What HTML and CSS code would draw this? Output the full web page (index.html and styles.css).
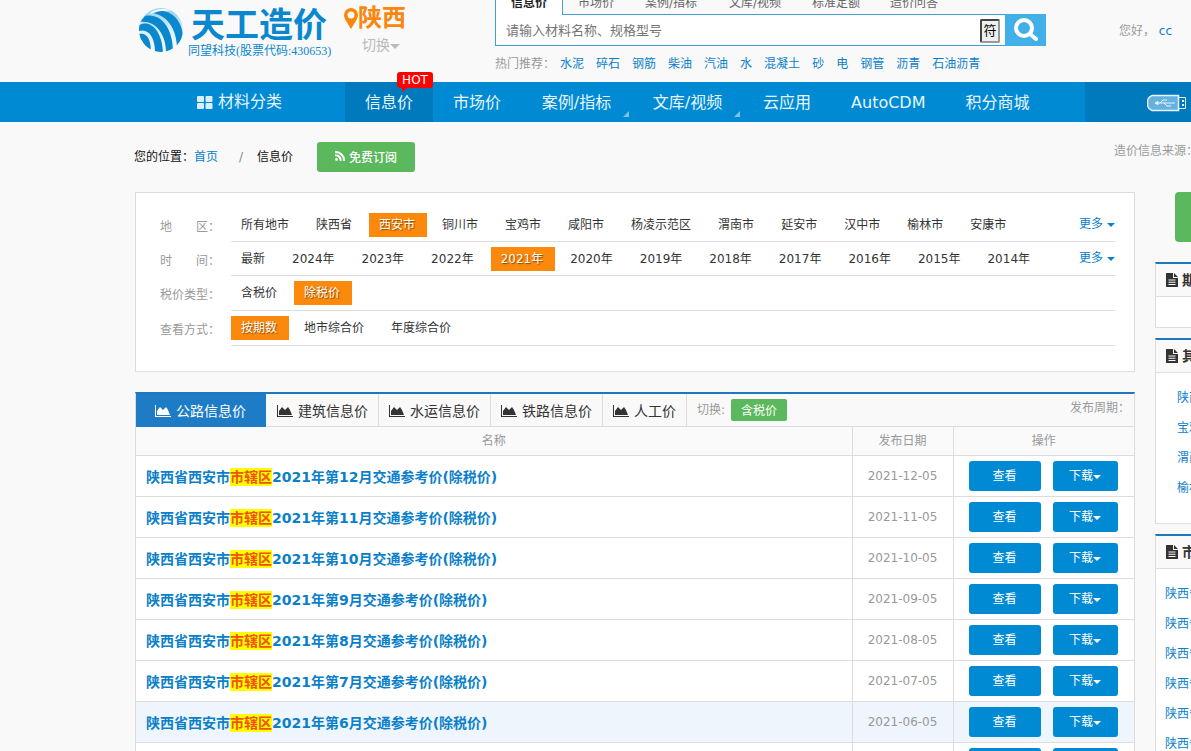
FILE: index.html
```html
<!DOCTYPE html>
<html lang="zh-CN">
<head>
<meta charset="utf-8">
<title>信息价 - 天工造价</title>
<link rel="stylesheet" href="styles.css">
</head>
<body>
<svg class="defs" width="0" height="0" aria-hidden="true">
  <symbol id="chart" viewBox="0 0 16 12"><path d="M0 0h1v11h15v1H0z"/><path d="M2 10V6l3-4 3 3 3-3 2 3 2 5z"/></symbol>
  <symbol id="file" viewBox="0 0 12 14"><path fill-rule="evenodd" d="M0 0h7v5h5v9H0zM2.500 6.500v1h7v-1zm0 2.300v1h7v-1zm0 2.300v1h7v-1z"/><path d="M8 0l4 4H8z"/></symbol>
</svg>

<header class="header">
  <a class="logo" href="#">
    <svg class="logo-ball" viewBox="0 0 44 44" aria-hidden="true">
      <defs>
        <clipPath id="ball"><circle cx="22" cy="22" r="22"/></clipPath>
        <linearGradient id="shade" x1="0" y1="0" x2="0" y2="1"><stop offset="0" stop-color="#8fcdee"/><stop offset=".5" stop-color="#d9effa"/><stop offset="1" stop-color="#f9f9f9"/></linearGradient>
      </defs>
      <g clip-path="url(#ball)">
        <path fill="url(#shade)" d="M0 0h44v44H0z"/>
        <g fill="#0a87cd">
          <path d="M0 26C7 24 12 30 12 44H5C5 36 4 31 0 32z"/>
          <path d="M0 17C11 11 23 22 24 44H16C16 30 10 20 0 23z"/>
          <path d="M6 8C22 5 34 20 34 44H27C27 26 16 12 1 14z"/>
          <path d="M20 3C34 2 45 15 44 32L38 42C38 23 30 8 14 5z"/>
        </g>
        <path fill="#f9f9f9" d="M12 4C20 0 27 0 32 3C25 2 18 3 11 6z"/>
      </g>
    </svg>
    <span class="logo-text">
      <strong class="logo-name">天工造价</strong>
      <span class="logo-sub">同望科技(股票代码:430653)</span>
    </span>
  </a>
  <div class="region">
    <div class="region-name">
      <svg width="14" height="21" viewBox="0 0 14 21" aria-hidden="true"><path fill="#f9870d" fill-rule="evenodd" d="M7 0a7 7 0 0 1 7 7c0 3-2 6-7 14C2 13 0 10 0 7a7 7 0 0 1 7-7zm0 3.500a3.500 3.500 0 1 0 0 7 3.500 3.500 0 0 0 0-7z"/></svg>
      <span>陕西</span>
    </div>
    <a class="region-switch" href="#">切换<i class="caret"></i></a>
  </div>
  <div class="search">
    <nav class="search-tabs">
      <a class="on" href="#">信息价</a><a href="#">市场价</a><a class="wide" href="#">案例/指标</a><a class="wide" href="#">文库/视频</a><a href="#">标准定额</a><a href="#">造价问答</a>
    </nav>
    <form class="search-box">
      <input class="search-input" type="text" aria-label="搜索" placeholder="请输入材料名称、规格型号">
      <button class="symbol-btn" type="button">符</button>
      <button class="search-btn" type="button" aria-label="搜索">
        <svg width="24" height="24" viewBox="0 0 24 24" aria-hidden="true"><circle cx="10" cy="10" r="8" fill="none" stroke="#fff" stroke-width="4"/><path d="M16 16l6 5" stroke="#fff" stroke-width="4" stroke-linecap="round"/></svg>
      </button>
    </form>
    <div class="hot">
      <span class="hot-label">热门推荐：</span>
      <a href="#">水泥</a><a href="#">碎石</a><a href="#">钢筋</a><a href="#">柴油</a><a href="#">汽油</a><a href="#">水</a><a href="#">混凝土</a><a href="#">砂</a><a href="#">电</a><a href="#">钢管</a><a href="#">沥青</a><a href="#">石油沥青</a>
    </div>
  </div>
  <div class="user">您好， <a href="#">cc</a></div>
</header>

<nav class="nav">
  <a class="nav-cat" href="#"><svg width="16" height="13" viewBox="0 0 16 13" fill="#d9f0fc" aria-hidden="true"><rect width="7" height="6" rx="1"/><rect x="8.500" width="7" height="6" rx="1"/><rect y="7" width="7" height="6" rx="1"/><rect x="8.500" y="7" width="7" height="6" rx="1"/></svg>材料分类</a>
  <a class="nav-item on" href="#">信息价<span class="badge">HOT</span></a>
  <a class="nav-item" href="#">市场价</a>
  <a class="nav-item sub" href="#">案例/指标</a>
  <a class="nav-item sub" href="#">文库/视频</a>
  <a class="nav-item" href="#">云应用</a>
  <a class="nav-item" href="#">AutoCDM</a>
  <a class="nav-item" href="#">积分商城</a>
  <a class="nav-usb" href="#" aria-label="USB">
    <svg width="40" height="18" viewBox="0 0 40 18" fill="none" stroke="#e4f5ff" aria-hidden="true"><path d="M31.500 1.500v15H5l-3-2-1.500-3v-5L2 3.500l3-2z" fill="#66b1de" stroke-width="1.500"/><path d="M32 3.500h6.500v11H32"/><path d="M35 6h2v2h-2zM35 10h2v2h-2z" fill="#e4f5ff" stroke="none"/><path d="M10 9h18M13 9l3-3h4M17 9l3 3h4"/><path d="M8 9l3-1.500v3z" fill="#e4f5ff"/></svg>
  </a>
</nav>

<div class="crumbs">
  <span>您的位置：</span><a href="#">首页</a><span class="slash">/</span><span>信息价</span>
  <button class="subscribe" type="button"><svg width="10" height="10" viewBox="0 0 10 10" fill="none" stroke="#fff" stroke-width="2" aria-hidden="true"><circle cx="1.500" cy="8.500" r="1.400" fill="#fff" stroke="none"/><path d="M0 4.200a5 5 0 0 1 5.500 5.800M0 1a8.500 8.500 0 0 1 9 9"/></svg>免费订阅</button>
  <span class="source">造价信息来源：</span>
</div>

<div class="page">
  <main class="main">
    <section class="filters">
      <div class="frow"><span class="flabel">地　　区：</span><div class="fitems"><a href="#">所有地市</a><a href="#">陕西省</a><a class="on" href="#">西安市</a><a href="#">铜川市</a><a href="#">宝鸡市</a><a href="#">咸阳市</a><a href="#">杨凌示范区</a><a href="#">渭南市</a><a href="#">延安市</a><a href="#">汉中市</a><a href="#">榆林市</a><a href="#">安康市</a><button class="more" type="button">更多<i class="caret"></i></button></div></div>
      <div class="frow"><span class="flabel">时　　间：</span><div class="fitems"><a href="#">最新</a><a href="#">2024年</a><a href="#">2023年</a><a href="#">2022年</a><a class="on" href="#">2021年</a><a href="#">2020年</a><a href="#">2019年</a><a href="#">2018年</a><a href="#">2017年</a><a href="#">2016年</a><a href="#">2015年</a><a href="#">2014年</a><button class="more" type="button">更多<i class="caret"></i></button></div></div>
      <div class="frow tall"><span class="flabel">税价类型：</span><div class="fitems"><a href="#">含税价</a><a class="on" href="#">除税价</a></div></div>
      <div class="frow tall"><span class="flabel">查看方式：</span><div class="fitems"><a class="on" href="#">按期数</a><a href="#">地市综合价</a><a href="#">年度综合价</a></div></div>
    </section>

    <section class="list">
      <div class="tabs">
        <a class="tab on" href="#"><svg><use href="#chart"/></svg>公路信息价</a>
        <a class="tab" href="#"><svg><use href="#chart"/></svg>建筑信息价</a>
        <a class="tab" href="#"><svg><use href="#chart"/></svg>水运信息价</a>
        <a class="tab" href="#"><svg><use href="#chart"/></svg>铁路信息价</a>
        <a class="tab" href="#"><svg><use href="#chart"/></svg>人工价</a>
        <span class="toggle">切换: <button class="tax" type="button">含税价</button></span>
        <span class="period">发布周期：</span>
      </div>
      <table class="table">
        <colgroup><col><col class="c-date"><col class="c-act"></colgroup>
        <thead><tr><th>名称</th><th>发布日期</th><th>操作</th></tr></thead>
        <tbody>
          <tr><td><a class="title" href="#">陕西省西安市<mark>市辖区</mark>2021年第12月交通参考价(除税价)</a></td><td class="date">2021-12-05</td><td><div class="acts"><button class="btn view" type="button">查看</button><button class="btn down" type="button">下载<i class="caret"></i></button></div></td></tr>
          <tr><td><a class="title" href="#">陕西省西安市<mark>市辖区</mark>2021年第11月交通参考价(除税价)</a></td><td class="date">2021-11-05</td><td><div class="acts"><button class="btn view" type="button">查看</button><button class="btn down" type="button">下载<i class="caret"></i></button></div></td></tr>
          <tr><td><a class="title" href="#">陕西省西安市<mark>市辖区</mark>2021年第10月交通参考价(除税价)</a></td><td class="date">2021-10-05</td><td><div class="acts"><button class="btn view" type="button">查看</button><button class="btn down" type="button">下载<i class="caret"></i></button></div></td></tr>
          <tr><td><a class="title" href="#">陕西省西安市<mark>市辖区</mark>2021年第9月交通参考价(除税价)</a></td><td class="date">2021-09-05</td><td><div class="acts"><button class="btn view" type="button">查看</button><button class="btn down" type="button">下载<i class="caret"></i></button></div></td></tr>
          <tr><td><a class="title" href="#">陕西省西安市<mark>市辖区</mark>2021年第8月交通参考价(除税价)</a></td><td class="date">2021-08-05</td><td><div class="acts"><button class="btn view" type="button">查看</button><button class="btn down" type="button">下载<i class="caret"></i></button></div></td></tr>
          <tr><td><a class="title" href="#">陕西省西安市<mark>市辖区</mark>2021年第7月交通参考价(除税价)</a></td><td class="date">2021-07-05</td><td><div class="acts"><button class="btn view" type="button">查看</button><button class="btn down" type="button">下载<i class="caret"></i></button></div></td></tr>
          <tr class="hover"><td><a class="title" href="#">陕西省西安市<mark>市辖区</mark>2021年第6月交通参考价(除税价)</a></td><td class="date">2021-06-05</td><td><div class="acts"><button class="btn view" type="button">查看</button><button class="btn down" type="button">下载<i class="caret"></i></button></div></td></tr>
          <tr><td></td><td class="date"></td><td><div class="acts"><button class="btn view" type="button" aria-label="查看"></button><button class="btn down" type="button" aria-label="下载"></button></div></td></tr>
        </tbody>
      </table>
    </section>
  </main>

  <aside class="side">
    <button class="side-btn" type="button" aria-label="订阅"></button>
    <section class="box"><h2><svg><use href="#file"/></svg>期</h2><div class="box-body empty"></div></section>
    <section class="box"><h2><svg><use href="#file"/></svg>其</h2><div class="box-body indent"><a href="#">陕西</a><a href="#">宝鸡</a><a href="#">渭南</a><a href="#">榆林</a></div></section>
    <section class="box"><h2><svg><use href="#file"/></svg>市</h2><div class="box-body"><a href="#">陕西省</a><a href="#">陕西省</a><a href="#">陕西省</a><a href="#">陕西省</a><a href="#">陕西省</a><a href="#">陕西省</a></div></section>
  </aside>
</div>
</body>
</html>
```
FILE: styles.css
```css
* { box-sizing: border-box; }
body {
  margin: 0;
  height: 100vh;
  overflow: hidden;
  background: #f9f9f9;
  color: #333;
  font: 12px/20px "DejaVu Sans", "Noto Sans CJK SC", sans-serif;
}
a { color: #0b80c9; text-decoration: none; }
button, input { font-family: inherit; font-size: 12px; margin: 0; }
button { cursor: pointer; border: 0; padding: 0; }
.defs { position: absolute; }
.caret {
  display: inline-block;
  border: 4px solid transparent;
  border-top-color: currentColor;
  border-bottom: 0;
  vertical-align: middle;
}

/* header */
.header { display: flex; height: 82px; padding-left: 139px; white-space: nowrap; }
.logo { display: flex; gap: 5px; width: 205px; padding-top: 8px; color: #0a87cd; }
.logo-ball { width: 44px; height: 44px; flex: none; }
.logo-text { display: flex; flex-direction: column; }
.logo-name { padding-left: 3px; font-size: 34px; line-height: 34px; font-weight: 700; }
.logo-sub { font: 12px/18px "Liberation Serif", "Noto Sans CJK SC", serif; }
.region { width: 151px; }
.region-name { display: flex; align-items: center; height: 36px; color: #f9870d; font-size: 24px; font-weight: 700; }
.region-switch { display: block; padding-left: 18px; color: #bbb; font-size: 14px; line-height: 18px; }
.region-switch .caret { border-width: 5px 5px 0; }
.search { flex: 0 0 551px; }
.search-tabs { position: relative; display: flex; height: 15px; align-items: flex-end; overflow: hidden; }
.search-tabs a { flex: none; height: 27px; padding: 0 15px; color: #666; line-height: 30px; text-align: center; }
.search-tabs .wide { width: 84px; }
.search-tabs .on { width: 68px; border: solid #42a0d6; border-width: 0 1px; background: #fff; color: #222; font-weight: 700; padding: 0; }
.search-box { display: flex; height: 32px; margin-top: -1px; border: 1px solid #42a0d6; border-right: 0; background: #fff; }
.search-input { flex: 1; min-width: 0; border: 0; padding: 0 10px; outline: 0; background: none; font-size: 13px; }
.search-input::placeholder { color: #757575; }
.symbol-btn { width: 20px; height: 24px; margin: 4px 5px 0 0; border: 2px inset #999; border-radius: 2px; background: #efefef; font-size: 13px; line-height: 20px; }
.search-btn { width: 41px; margin: -1px 0; background: #42b0e8; display: flex; align-items: center; justify-content: center; }
.hot { display: flex; gap: 12px; padding-top: 8px; }
.hot-label { margin-right: -7px; color: #999; }
.user { padding: 21px 0 0 73px; color: #999; }

/* navigation */
.nav { display: flex; height: 40px; background: #008ad3; line-height: 42px; white-space: nowrap; }
.nav a { color: #e6f6ff; font-size: 16px; }
.nav-cat { display: flex; align-items: center; gap: 5px; width: 345px; padding-left: 197px; }
.nav-item { position: relative; padding: 0 20px; text-align: center; }
.nav-item.on { background: #007abd; }
.sub { width: 111px; }
.sub::after { content: ""; position: absolute; right: 3px; bottom: 5px; border: solid transparent; border-color: transparent transparent #7cc3ea; border-width: 0 0 6px 6px; }
.badge { position: absolute; top: -10px; right: 0; width: 36px; height: 16px; border-radius: 3px; background: #f00; color: #fff; font-size: 12px; line-height: 16px; }
.badge::after { content: ""; position: absolute; left: 5px; top: 16px; border: solid transparent; border-width: 4px 5px 0 0; border-top-color: #f00; }
.nav-usb { flex: 1; max-width: 106px; margin-left: auto; padding: 2px 0 0 62px; background: #007abd; display: flex; align-items: center; overflow: hidden; }
.nav-usb svg { flex: none; }

/* breadcrumb */
.crumbs { display: flex; align-items: center; height: 70px; padding-left: 134px; color: #111; white-space: nowrap; overflow: hidden; }
.slash { margin: 0 14px 0 21px; color: #888; }
.subscribe { display: flex; align-items: center; justify-content: center; gap: 4px; width: 98px; height: 30px; margin-left: 24px; padding-bottom: 2px; border-radius: 3px; background: #5cb85c; color: #fff; font-weight: 500; }
.source { flex: 0 0 77px; margin: 0 0 12px auto; color: #999; overflow: hidden; }

/* columns */
.page { display: flex; gap: 20px; padding-left: 135px; }
.main { flex: 1; min-width: 0; }
.side { flex: 0 0 36px; overflow: hidden; white-space: nowrap; }

/* filters */
.filters { padding: 15px 19px 25px 24px; border: 1px solid #ddd; background: #fff; }
.frow { display: flex; height: 34px; white-space: nowrap; }
.tall { height: 35px; }
.flabel { width: 71px; padding-top: 9px; color: #999; }
.fitems { display: flex; flex: 1; gap: 5px; padding-top: 5px; border-bottom: 1px solid #ddd; }
.fitems a { height: 24px; padding: 0 12px 0 10px; color: #333; line-height: 24px; }
.fitems .on { background: #fb890b; color: #fff; text-shadow: 1px 1px 1px #8a4a00; }
.more { height: 22px; margin-left: auto; background: none; color: #0b80c9; line-height: 22px; }
.more .caret { margin-left: 4px; }

/* price list */
.list { margin-top: 20px; border: 1px solid #ddd; border-top: 2px solid #1e78bd; }
.tabs { display: flex; height: 33px; border-bottom: 1px solid #ddd; white-space: nowrap; }
.tab { display: flex; align-items: center; gap: 5px; height: 33px; padding: 0 10px; border-right: 1px solid #ddd; color: #333; font-size: 14px; }
.tab svg { width: 16px; height: 12px; fill: currentColor; }
.tab.on { width: 131px; padding: 0 19px; border-color: #f9f9f9; background: #1e7cc6 padding-box; color: #fff; }
.toggle { display: flex; gap: 6px; align-items: center; padding-left: 10px; color: #999; }
.tax { width: 56px; height: 22px; padding-bottom: 2px; border-radius: 2px; background: #5cb85c; color: #fff; }
.period { margin-left: auto; padding: 4px 4px 0 0; color: #999; }
.table { width: 100%; border-collapse: collapse; table-layout: fixed; background: #fff; }
.c-date { width: 101px; }
.c-act { width: 181px; }
.table th { height: 28px; padding: 0; border-bottom: 1px solid #ddd; background: #fafafa; color: #999; font-weight: 400; }
.table td { height: 41px; padding: 0; border-bottom: 1px solid #ddd; }
.table th + th, .table td + td { border-left: 1px solid #ddd; }
.hover td { background: #eef5fd; }
.title { display: block; padding: 2px 0 0 10px; font-size: 14px; font-weight: 700; }
.title mark { padding: 1px 0; background: #ff0; color: #f4510b; }
.date { color: #999; text-align: center; }
.acts { display: flex; gap: 12px; padding-left: 15px; }
.btn { height: 30px; padding-bottom: 2px; border-radius: 3px; background: #008ad3; color: #fff; }
.view { width: 72px; }
.down { width: 65px; }

/* sidebar */
.side-btn { display: block; width: 200px; height: 50px; margin: 0 0 20px 20px; border-radius: 4px; background: #5cb85c; }
.box { width: 260px; margin-bottom: 10px; border: 1px solid #ddd; border-top: 2px solid #1e78bd; background: #fff; }
.box h2 { display: flex; align-items: center; gap: 4px; height: 33px; margin: 0; padding-left: 10px; border-bottom: 1px solid #ddd; background: #f9f9f9; font-size: 14px; font-weight: 700; }
.box h2 svg { width: 12px; height: 14px; fill: #333; }
.box-body { padding: 10px 0 20px 9px; }
.box-body a { display: block; line-height: 30px; }
.box-body.indent { padding-left: 21px; }
.box-body.empty { height: 30px; padding: 0; }
```
